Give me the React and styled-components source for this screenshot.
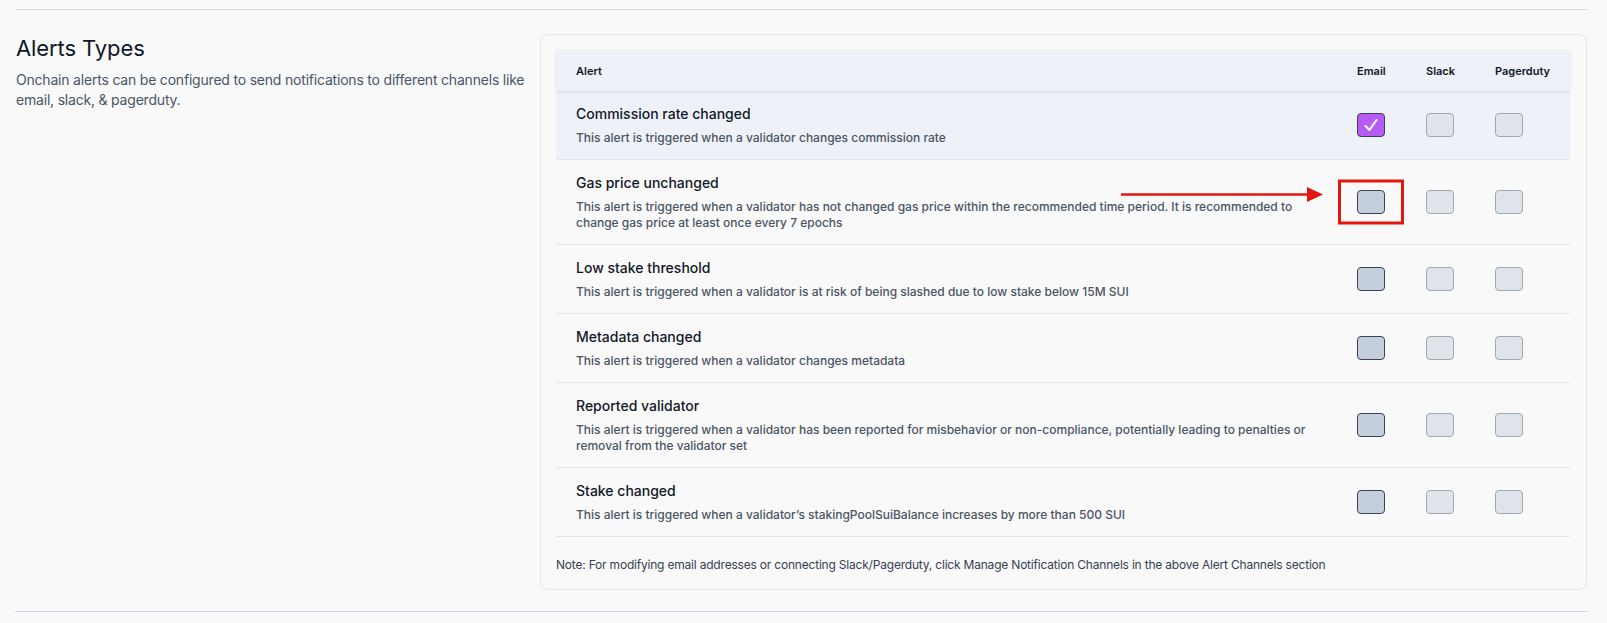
import styled, { createGlobalStyle } from "styled-components"

const GlobalStyle = createGlobalStyle`
  * { box-sizing: border-box; }
  body {
    margin: 0;
    background: #f9f9fa;
    font-family: Inter, "Noto Sans", sans-serif;
    color: #111827;
  }
`;

const Page = styled.div`
  padding: 9px 20px 0 15px;
`;

const Section = styled.section`
  display: grid;
  grid-template-columns: 525px 1fr;
  padding: 24px 0 21px;
  border-top: 1px solid #d5d9df;
  border-bottom: 1px solid #cdd6e2;
`;

const Intro = styled.div`
  padding: 0 2px 0 1px;
`;

const Heading = styled.h2`
  margin: 0;
  font-size: 22px;
  line-height: 28px;
  font-weight: 400;
  color: #111827;
  letter-spacing: -0.1px;
`;

const IntroText = styled.p`
  margin: 8px 0 0;
  font-size: 14px;
  line-height: 20px;
  color: #4b5563;
  letter-spacing: -0.2px;
`;

const Card = styled.div`
  border: 1px solid #e5e7eb;
  border-radius: 8px;
  background: #f9f9fa;
  padding: 15px 16px 16px 15px;
`;

const Grid = styled.div`
  display: grid;
  grid-template-columns: 1fr 69px 69px 95px;
  align-items: center;
  position: relative;
  background: ${(p) => (p.$tone === "head" || p.$tone === "active" ? "#eef1f8" : "transparent")};
  border-bottom: ${(p) => (p.$tone === "head" ? "none" : "1px solid #e3e5eb")};
  box-shadow: ${(p) => (p.$tone === "head" ? "0 1px 3px rgba(17, 24, 39, 0.12)" : "none")};
  z-index: ${(p) => (p.$tone === "head" ? 1 : 0)};
`;

const HeadCell = styled.div`
  height: 41px;
  display: flex;
  align-items: center;
  padding-left: 20px;
  font-size: 11px;
  font-weight: 600;
  color: #111827;
`;

const AlertCell = styled.div`
  padding: 13px 20px;
`;

const Title = styled.div`
  font-size: 14px;
  line-height: 20px;
  font-weight: 500;
  color: #111827;
`;

const Desc = styled.div`
  margin-top: 6px;
  font-size: 12px;
  line-height: 16px;
  font-weight: 500;
  color: #4b5563;
`;

const BoxCell = styled.div`
  position: relative;
  padding-left: 20px;
  display: flex;
  align-items: center;
`;

const Check = styled.div`
  width: 28px;
  height: 24px;
  border-radius: 4px;
  border: 1px solid ${(p) => (p.$variant === "muted" ? "#a2a8b0" : "#3b4352")};
  background: ${(p) =>
    p.$variant === "checked" ? "#b65cf5" : p.$variant === "muted" ? "#dfe3ea" : "#c4cfdb"};
  display: flex;
  align-items: center;
  justify-content: center;
`;

const Highlight = styled.div`
  position: absolute;
  left: 1px;
  top: 50%;
  transform: translateY(-50%);
  width: 66px;
  height: 45px;
  border: 3px solid #e2170f;
`;

const Arrow = styled.svg`
  position: absolute;
  right: calc(100% + 14px);
  top: 50%;
  margin-top: -16px;
`;

const Note = styled.p`
  margin: 20px 0 0;
  font-size: 12px;
  line-height: 16px;
  color: #374151;
  letter-spacing: -0.2px;
`;

const alerts = [
  {
    title: "Commission rate changed",
    desc: "This alert is triggered when a validator changes commission rate",
    email: true,
  },
  {
    title: "Gas price unchanged",
    desc: "This alert is triggered when a validator has not changed gas price within the recommended time period. It is recommended to change gas price at least once every 7 epochs",
    marked: true,
  },
  {
    title: "Low stake threshold",
    desc: "This alert is triggered when a validator is at risk of being slashed due to low stake below 15M SUI",
  },
  {
    title: "Metadata changed",
    desc: "This alert is triggered when a validator changes metadata",
  },
  {
    title: "Reported validator",
    desc: "This alert is triggered when a validator has been reported for misbehavior or non-compliance, potentially leading to penalties or removal from the validator set",
  },
  {
    title: "Stake changed",
    desc: "This alert is triggered when a validator\u2019s stakingPoolSuiBalance increases by more than 500 SUI",
  },
];

const CheckMark = () => (
  <svg width="16" height="14" viewBox="0 0 16 14" fill="none">
    <path d="M2.5 8 L6.5 12 L13.5 2" stroke="#fff" strokeWidth="2" strokeLinecap="round" strokeLinejoin="round" />
  </svg>
);

const App = () => {
  return (
    <Page>
      <GlobalStyle />
      <Section>
        <Intro>
          <Heading>Alerts Types</Heading>
          <IntroText>
            Onchain alerts can be configured to send notifications to different channels like email, slack, &amp; pagerduty.
          </IntroText>
        </Intro>
        <Card>
          <Grid $tone="head">
            <HeadCell>Alert</HeadCell>
            <HeadCell>Email</HeadCell>
            <HeadCell>Slack</HeadCell>
            <HeadCell>Pagerduty</HeadCell>
          </Grid>
          {alerts.map((a) => (
            <Grid key={a.title} $tone={a.email ? "active" : "row"}>
              <AlertCell>
                <Title>{a.title}</Title>
                <Desc>{a.desc}</Desc>
              </AlertCell>
              <BoxCell>
                {a.marked && (
                  <Arrow width="202" height="16" viewBox="0 0 202 16">
                    <line x1="0" y1="8.5" x2="188" y2="8.5" stroke="#e2170f" strokeWidth="2.6" />
                    <polygon points="186,1 202,8.5 186,16" fill="#e2170f" />
                  </Arrow>
                )}
                {a.marked && <Highlight />}
                <Check $variant={a.email ? "checked" : "default"}>{a.email && <CheckMark />}</Check>
              </BoxCell>
              <BoxCell>
                <Check $variant="muted" />
              </BoxCell>
              <BoxCell>
                <Check $variant="muted" />
              </BoxCell>
            </Grid>
          ))}
          <Note>
            Note: For modifying email addresses or connecting Slack/Pagerduty, click Manage Notification Channels in the above Alert Channels section
          </Note>
        </Card>
      </Section>
    </Page>
  )
}

export default App
